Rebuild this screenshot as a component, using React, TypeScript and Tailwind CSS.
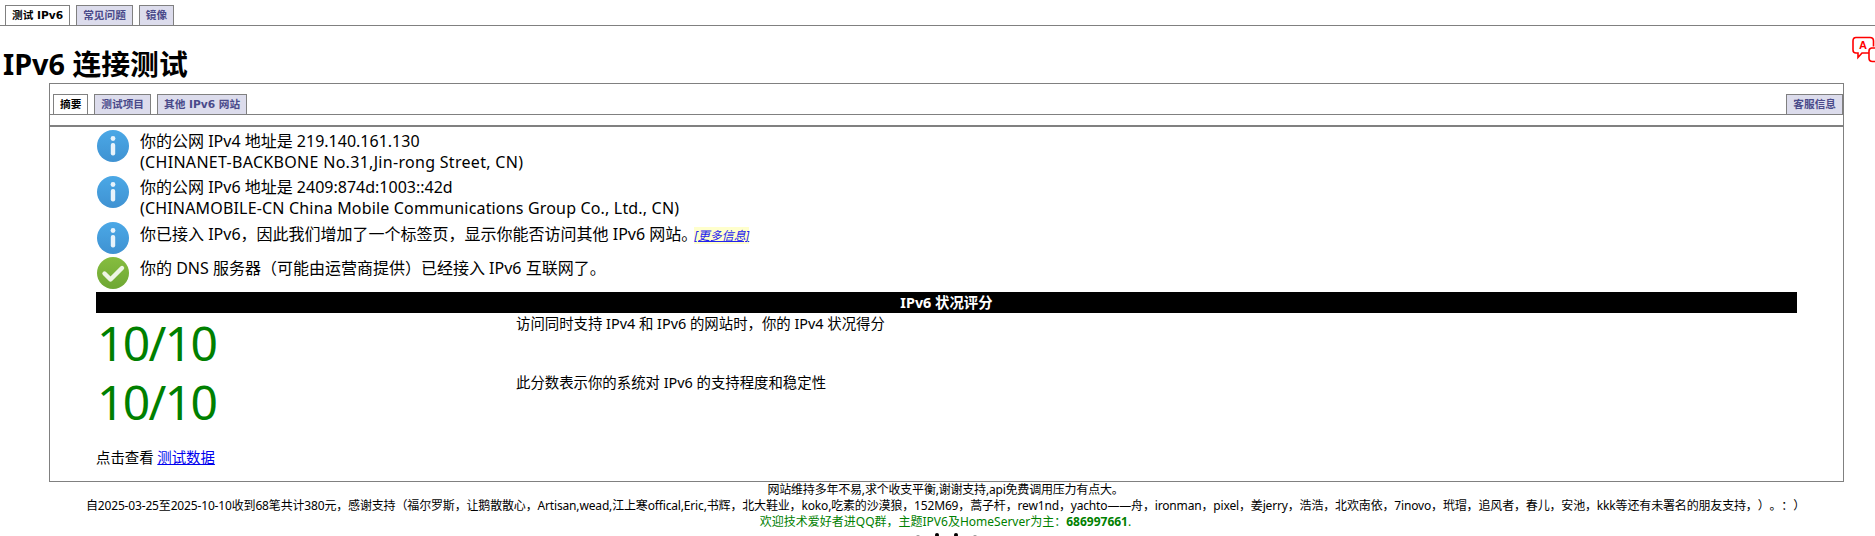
import type { ReactNode } from 'react';

const bodyFont = "font-['Noto_Sans','Noto_Sans_CJK_SC',sans-serif]";
const tabFont = "font-['DejaVu_Sans','Noto_Sans_CJK_SC',sans-serif]";

function Tab({ label, active, className = '' }: { label: string; active?: boolean; className?: string }) {
  return (
    <div
      className={`${tabFont} h-[20px] border border-b-0 border-[#808080] px-[6px] text-[10.67px] font-bold leading-[19px] whitespace-nowrap ${
        active ? 'bg-white text-black' : 'bg-[#dcdcec] text-[#4a4a8a]'
      } ${className}`}
    >
      {label}
    </div>
  );
}

function InfoIcon() {
  return (
    <svg width="32" height="32" viewBox="0 0 32 32" className="shrink-0">
      <defs>
        <linearGradient id="infoFill" x1="0" y1="0" x2="0" y2="1">
          <stop offset="0" stopColor="#4ba8e6" />
          <stop offset="1" stopColor="#3f92d2" />
        </linearGradient>
      </defs>
      <circle cx="16" cy="16" r="16" fill="url(#infoFill)" />
      <circle cx="16" cy="8.5" r="2.4" fill="#e8f3fb" />
      <rect x="13.8" y="13" width="4.4" height="12.5" rx="2" fill="#e8f3fb" />
    </svg>
  );
}

function CheckIcon() {
  return (
    <svg width="32" height="32" viewBox="0 0 32 32" className="shrink-0">
      <defs>
        <linearGradient id="okFill" x1="0" y1="0" x2="0" y2="1">
          <stop offset="0" stopColor="#86bd3f" />
          <stop offset="1" stopColor="#6ea733" />
        </linearGradient>
      </defs>
      <circle cx="16" cy="16" r="16" fill="url(#okFill)" />
      <path d="M7.5 16.5 L13.5 22.5 L25 11" fill="none" stroke="#eef5e4" strokeWidth="4.4" strokeLinecap="round" strokeLinejoin="round" />
    </svg>
  );
}

function Row({ icon, children, className = '' }: { icon: ReactNode; children: ReactNode; className?: string }) {
  return (
    <div className={`flex gap-[11px] pl-[1px] ${className}`}>
      {icon}
      <div className="text-[16px] leading-[21px]">{children}</div>
    </div>
  );
}

function TranslateIcon() {
  return (
    <svg width="23" height="27" viewBox="0 0 23 27" className="absolute right-0 top-[36px]" fill="none" stroke="#ff0000" strokeWidth="1.6">
      <path d="M21.5 10.500 V5 Q21.500 1.500 18 1.500 H4 Q1 1.500 1 5 V14 Q1 17 4 17 H6 V21.500 L10 17 H17" />
      <path d="M23 12 H19.500 Q17 12.500 17 15 V22 Q17 25.500 20.500 25.500 H23" />
      <text x="11" y="13" textAnchor="middle" fontSize="11" fontWeight="700" fill="#ff0000" stroke="none" fontFamily="'Liberation Sans', sans-serif">A</text>
    </svg>
  );
}

export default function App() {
  return (
    <div className={`${bodyFont} relative h-screen overflow-hidden bg-white text-black`}>
      <TranslateIcon />

      <div className="flex h-[26px] items-end gap-[6px] border-b border-[#808080] pl-[5px]">
        <Tab label="测试 IPv6" active className="px-[5px]" />
        <Tab label="常见问题" />
        <Tab label="镜像" />
      </div>

      <h1 className="mt-[17px] ml-[3px] h-[40px] text-[28.8px] font-bold leading-[41px]">IPv6 连接测试</h1>

      <div className="mr-[31px] ml-[49px] h-[399px] border border-[#808080]">
        <div className="flex h-[31px] items-end gap-[6px] border-b border-[#808080] pl-[3px]">
          <Tab label="摘要" active />
          <Tab label="测试项目" />
          <Tab label="其他 IPv6 网站" />
          <Tab label="客服信息" className="ml-auto" />
        </div>
        <div className="mt-[10px] border-t-2 border-[#808080] pt-[3px] pl-[46px]">
          <Row icon={<InfoIcon />} className="h-[46px]">
            <div className="mt-[1px]">你的公网 IPv4 地址是 219.140.161.130</div>
            <div className="tracking-[0.3px]">(CHINANET-BACKBONE No.31,Jin-rong Street, CN)</div>
          </Row>
          <Row icon={<InfoIcon />} className="h-[46px]">
            <div className="mt-[1px]">你的公网 IPv6 地址是 2409:874d:1003::42d</div>
            <div className="tracking-[0.17px]">(CHINAMOBILE-CN China Mobile Communications Group Co., Ltd., CN)</div>
          </Row>
          <Row icon={<InfoIcon />} className="h-[35px]">
            <div className="mt-[2px]">
              你已接入 IPv6，因此我们增加了一个标签页，显示你能否访问其他 IPv6 网站。
              <a className="-ml-[3px] bg-[#ffffcc] text-[12px] text-[#2222ee] italic underline">[更多信息]</a>
            </div>
          </Row>
          <Row icon={<CheckIcon />} className="h-[35px]">
            <div className="mt-[1px]">你的 DNS 服务器（可能由运营商提供）已经接入 IPv6 互联网了。</div>
          </Row>

          <div className="w-[1701px] bg-black text-center text-[14.4px] font-bold leading-[21px] text-white">IPv6 状况评分</div>

          <div className="grid w-[1701px] grid-cols-[420px_1fr]">
            <div className="ml-[1px] h-[59px] text-[48px] leading-[59px] tracking-[-1.7px] text-[#008000]">10/10</div>
            <div className="pt-[1px] text-[14.4px] leading-[20px]">访问同时支持 IPv4 和 IPv6 的网站时，你的 IPv4 状况得分</div>
            <div className="ml-[1px] h-[59px] text-[48px] leading-[59px] tracking-[-1.7px] text-[#008000]">10/10</div>
            <div className="pt-[1px] text-[14.4px] leading-[20px]">此分数表示你的系统对 IPv6 的支持程度和稳定性</div>
          </div>

          <div className="mt-[17px] text-[14.4px] leading-[20px]">
            点击查看 <a className="text-[#0000ee] underline">测试数据</a>
          </div>
        </div>
      </div>

      <div className="pl-[16px] text-center text-[12px] leading-[16px] [text-spacing-trim:space-all]">
        <div className="tracking-[-0.2px]">网站维持多年不易,求个收支平衡,谢谢支持,api免费调用压力有点大。</div>
        <div className="tracking-[-0.16px]">
          自2025-03-25至2025-10-10收到68笔共计380元，感谢支持（福尔罗斯，让鹅散散心，Artisan,wead,江上寒offical,Eric,书辉，北大鞋业，koko,吃素的沙漠狼，152M69，蒿子杆，rew1nd，yachto——舟，ironman，pixel，姜jerry，浩浩，北欢南依，7inovo，玳瑁，追风者，春儿，安池，kkk等还有未署名的朋友支持，）。：）
        </div>
        <div className="text-[#008000]">
          欢迎技术爱好者进QQ群，主题IPV6及HomeServer为主：<b>686997661</b>.
        </div>
        <div className="mt-[3px] flex justify-center gap-[15px] pl-[2px]">
          <span className="mt-[2px] size-[4px] rounded-full bg-[#999999]" />
          <span className="size-[4px] rounded-full bg-black" />
          <span className="size-[4px] rounded-full bg-black" />
          <span className="mt-[2px] size-[4px] rounded-full bg-[#999999]" />
        </div>
      </div>
    </div>
  );
}
